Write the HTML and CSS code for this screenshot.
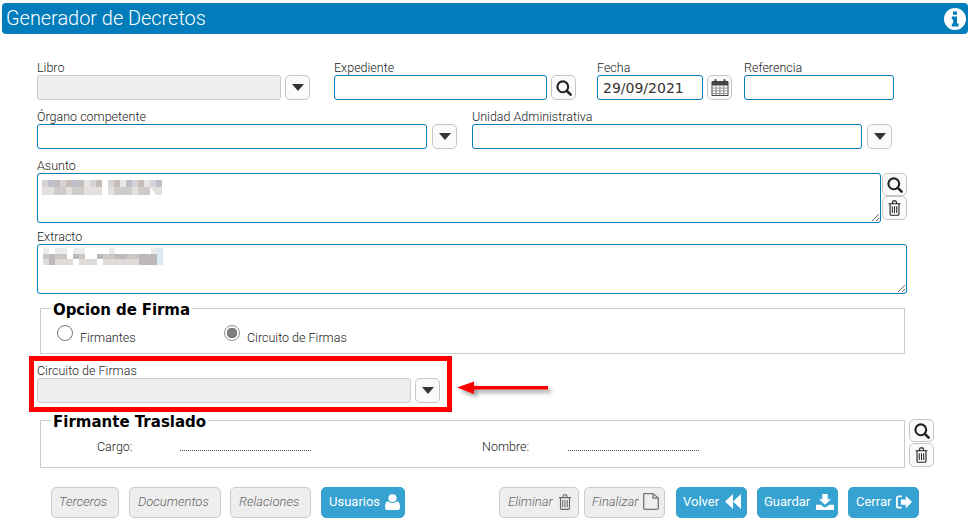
FILE: index.html
```html
<!DOCTYPE html>
<html lang="es">
<head>
<meta charset="utf-8">
<title>Generador de Decretos</title>
<link rel="stylesheet" href="styles.css">
</head>
<body>
<svg class="defs" width="0" height="0" aria-hidden="true">
  <symbol id="i-caret" viewBox="0 0 12 7"><path d="M0 0h12L6 7z"/></symbol>
  <symbol id="i-search" viewBox="0 0 16 16"><circle cx="6.800" cy="6.800" r="5.400" fill="none" stroke="currentColor" stroke-width="2.100"/><path d="M10.800 10.800l3.800 3.800" stroke="currentColor" stroke-width="2.600" stroke-linecap="round"/></symbol>
  <symbol id="i-trash" viewBox="0 0 14 17"><path fill="none" stroke="currentColor" stroke-width="1.200" d="M.6 3.900h12.800M2.200 3.900v11a1.400 1.400 0 0 0 1.400 1.400h6.800a1.400 1.400 0 0 0 1.400-1.400v-11M4.500 3.900l.7-2.200a1 1 0 0 1 1-.9h1.600a1 1 0 0 1 1 .9l.7 2.200"/><path fill="none" stroke="currentColor" stroke-width="1.100" d="M4.600 6.500v7.500M7 6.500v7.500M9.400 6.500v7.500"/></symbol>
  <symbol id="i-cal" viewBox="0 0 18 18"><path fill="currentColor" d="M1.500 2.500h2v-1a1 1 0 0 1 2 0v1h7v-1a1 1 0 0 1 2 0v1h2a1 1 0 0 1 1 1v13a1 1 0 0 1-1 1h-15a1 1 0 0 1-1-1v-13a1 1 0 0 1 1-1z"/><path fill="#fff" d="M1.500 7h15v9.500h-15z"/><path fill="none" stroke="#666" stroke-width=".7" d="M5 7v9.500M8.900 7v9.500M12.800 7v9.500M1.500 9.600h15M1.500 12.400h15M1.500 15h15"/></symbol>
  <symbol id="i-info" viewBox="0 0 22 22"><circle cx="11" cy="11" r="11" fill="#fff"/><path fill="#027cbb" d="M9 3.500h4v3.300H9zM7.800 8.600H13v7h1.600v3H7.800v-3h1.400v-4H7.800z"/></symbol>
  <symbol id="i-user" viewBox="0 0 16 18" preserveAspectRatio="none"><circle cx="8" cy="4.600" r="4.400" fill="currentColor"/><path fill="currentColor" d="M3.200 8.200C4.400 9.400 6 10 8 10s3.600-.6 4.800-1.800c2 .4 3.200 2.400 3.200 6v1.300c0 1.500-1 2.500-2.500 2.500h-11C1 18 0 17 0 15.500v-1.300c0-3.600 1.200-5.600 3.200-6z"/></symbol>
  <symbol id="i-back" viewBox="0 0 16 18" preserveAspectRatio="none"><path fill="currentColor" d="M8 0v18L0 9zM16 0v18L8 9z"/></symbol>
  <symbol id="i-down" viewBox="0 0 18 18" preserveAspectRatio="none"><path fill="currentColor" d="M6.300 0h5.400v6H15L9 12 3 6h3.300z"/><path fill="currentColor" d="M0 12h4.800l2.400 2.300c1 .9 2.600.9 3.600 0L13.200 12H18v6H0z"/></symbol>
  <symbol id="i-out" viewBox="0 0 18 16" preserveAspectRatio="none"><path fill="none" stroke="currentColor" stroke-width="2" d="M6.500 1.500H3A2 2 0 0 0 1 3.500v9a2 2 0 0 0 2 2h3.500"/><path fill="currentColor" d="M5.500 5h5.500V.8L18 8l-7 7.200V11H5.500z"/></symbol>
  <symbol id="i-file" viewBox="0 0 16 20" preserveAspectRatio="none"><path fill="none" stroke="currentColor" stroke-width="1.300" d="M.7.700h9.300l5.300 5.300v12a1.300 1.300 0 0 1-1.300 1.300H2A1.300 1.300 0 0 1 .7 18zM10 .7V6h5.300"/></symbol>
</svg>

<header class="titlebar">
  <h1 class="title">Generador de Decretos</h1>
  <svg class="info"><use href="#i-info"/></svg>
</header>

<form class="form">
  <div class="row">
    <div class="field w-libro"><label class="lbl">Libro</label><input class="inp inp-off" disabled></div>
    <button type="button" class="ibtn"><svg class="ic-caret"><use href="#i-caret"/></svg></button>
    <div class="field w-exp gap-exp"><label class="lbl">Expediente</label><input class="inp"></div>
    <button type="button" class="ibtn"><svg class="ic-search"><use href="#i-search"/></svg></button>
    <div class="field w-fecha gap-fecha"><label class="lbl">Fecha</label><input class="inp inp-date" value="29/09/2021"></div>
    <button type="button" class="ibtn"><svg class="ic-cal"><use href="#i-cal"/></svg></button>
    <div class="field w-ref gap-ref"><label class="lbl">Referencia</label><input class="inp"></div>
  </div>

  <div class="row row-org">
    <div class="field w-org"><label class="lbl">Órgano competente</label><input class="inp"></div>
    <button type="button" class="ibtn"><svg class="ic-caret"><use href="#i-caret"/></svg></button>
    <div class="field w-org gap-uni"><label class="lbl">Unidad Administrativa</label><input class="inp"></div>
    <button type="button" class="ibtn"><svg class="ic-caret"><use href="#i-caret"/></svg></button>
  </div>

  <div class="row row-area">
    <div class="field w-asunto">
      <label class="lbl">Asunto</label>
      <div class="area-wrap">
        <textarea class="area"></textarea>
        <svg class="mosaic mosaic-a" width="120" height="15" viewBox="0 0 120 15">
          <path fill="#d6d2d6" d="M0 0h6v7H0zM18 0h6v7h-6zM48 0h6v7h-6zM66 0h6v7h-6zM90 0h6v7h-6zM108 0h6v7h-6z"/>
          <path fill="#c4bdb8" d="M12 0h6v7h-6zM24 0h6v7h-6zM36 0h6v7h-6zM54 0h6v7h-6zM72 0h6v7h-6zM96 0h6v7h-6z"/>
          <path fill="#bcc0cc" d="M6 0h6v7H6zM30 0h6v7h-6zM84 0h6v7h-6zM114 0h6v7h-6z"/>
          <path fill="#e8e6e4" d="M42 0h6v7h-6zM78 0h6v7h-6zM102 0h6v7h-6z"/>
          <path fill="#e4e0e0" d="M0 7h12v8H0zM24 7h6v8h-6zM42 7h18v8H42zM66 7h6v8h-6zM90 7h6v8h-6zM108 7h12v8h-6z"/>
          <path fill="#cfcbcb" d="M12 7h12v8H12zM30 7h12v8H30zM72 7h18v8H72zM96 7h12v8H96z"/>
          <path fill="#fff" d="M60 0h6v15h-6z"/>
        </svg>
      </div>
    </div>
    <div class="sidebtns sidebtns-a">
      <button type="button" class="ibtn ibtn-s"><svg class="ic-search"><use href="#i-search"/></svg></button>
      <button type="button" class="ibtn ibtn-s"><svg class="ic-trash"><use href="#i-trash"/></svg></button>
    </div>
  </div>

  <div class="field w-ext row-ext">
    <label class="lbl">Extracto</label>
    <div class="area-wrap">
      <textarea class="area"></textarea>
      <svg class="mosaic mosaic-b" width="120" height="17" viewBox="0 0 120 17">
        <path fill="#eceaea" d="M0 0h6v6H0zM12 0h12v6H12zM30 0h12v6H30zM66 0h6v6h-6zM108 0h6v6h-6z"/>
        <path fill="#cbc7c6" d="M0 6h6v5H0zM12 6h12v5H12zM36 6h6v5h-6zM60 6h12v5H60zM84 6h12v5H84zM108 6h6v5h-6z"/>
        <path fill="#bdb8ba" d="M6 6h6v11H6zM30 6h6v5h-6zM54 6h6v5h-6zM72 6h12v5H72zM96 6h12v11H96zM102 6h12v11h-12z"/>
        <path fill="#dfdbd9" d="M0 11h6v6H0zM12 11h18v6H12zM36 11h18v6H36zM60 11h36v6H60z"/>
        <path fill="#dcebf8" d="M114 0h6v17h-6z"/>
      </svg>
    </div>
  </div>

  <fieldset class="group group-op">
    <legend class="legend">Opcion de Firma</legend>
    <div class="radios">
      <label class="radio r-first"><input type="radio" name="op" class="rad"><span class="rad-txt">Firmantes</span></label>
      <label class="radio"><input type="radio" name="op" class="rad" checked><span class="rad-txt">Circuito de Firmas</span></label>
    </div>
  </fieldset>

  <div class="row row-circ">
    <div class="field w-circ"><label class="lbl">Circuito de Firmas</label><input class="inp inp-off" disabled></div>
    <button type="button" class="ibtn"><svg class="ic-caret"><use href="#i-caret"/></svg></button>
    <div class="mark"></div>
    <svg class="arrow" width="92" height="14" viewBox="0 0 92 14"><path fill="#f00" d="M0 6.500L17 .5v4.500h74v3.500H17V13z"/></svg>
  </div>

  <div class="row row-tras">
    <fieldset class="group group-tr">
      <legend class="legend">Firmante Traslado</legend>
      <div class="kv">
        <span class="k k-cargo">Cargo:</span><span class="dots"></span>
        <span class="k k-nombre">Nombre:</span><span class="dots"></span>
      </div>
    </fieldset>
    <div class="sidebtns sidebtns-b">
      <button type="button" class="ibtn ibtn-s"><svg class="ic-search"><use href="#i-search"/></svg></button>
      <button type="button" class="ibtn ibtn-s"><svg class="ic-trash"><use href="#i-trash"/></svg></button>
    </div>
  </div>

  <div class="actions">
    <button type="button" class="btn off w-terc">Terceros</button>
    <button type="button" class="btn off w-doc">Documentos</button>
    <button type="button" class="btn off w-rel">Relaciones</button>
    <button type="button" class="btn on w-usu">Usuarios<svg class="bi bi-user"><use href="#i-user"/></svg></button>
    <span class="spacer"></span>
    <button type="button" class="btn off w-eli">Eliminar<svg class="bi bi-trash"><use href="#i-trash"/></svg></button>
    <button type="button" class="btn off w-fin">Finalizar<svg class="bi bi-file"><use href="#i-file"/></svg></button>
    <button type="button" class="btn on w-vol">Volver<svg class="bi bi-back"><use href="#i-back"/></svg></button>
    <button type="button" class="btn on w-gua">Guardar<svg class="bi bi-down"><use href="#i-down"/></svg></button>
    <button type="button" class="btn on w-cer">Cerrar<svg class="bi bi-out"><use href="#i-out"/></svg></button>
  </div>
</form>
</body>
</html>
```
FILE: styles.css
```css
* { box-sizing: border-box; }
html, body { margin: 0; padding: 0; height: 100%; overflow: hidden; background: #fff; }
body { font-family: Roboto, "Liberation Sans", sans-serif; color: #333; font-size: 12.5px; }
.defs { position: absolute; }

.titlebar { display: flex; align-items: center; justify-content: space-between; height: 31px; margin: 3px 0 0 2px; padding: 0 2px 1px 4px; background: #027cbb; border-radius: 4px; }
.title { margin: 0; font-size: 19.900px; font-weight: 300; color: #fff; }
.info { width: 22px; height: 22px; margin-top: 1px; }

.form { padding: 27px 0 0 37px; }
.row { display: flex; align-items: flex-end; margin-bottom: 10px; }
.field { display: flex; flex-direction: column; }
.lbl { height: 14px; line-height: 14px; font-size: 12.500px; font-weight: 300; color: #222; }
.inp { display: block; width: 100%; height: 25px; padding: 0 5px; border: 1px solid #027cbb; border-radius: 3px; background: #fff; outline: none; }
.inp-off { background: #eee; border-color: #ccc; }
.inp-date { font-family: "DejaVu Sans", sans-serif; font-size: 14px; color: #333; }

.ibtn { display: flex; align-items: center; justify-content: center; flex: none; width: 25px; height: 25px; margin-left: 4px; padding: 0; border: 1px solid #c6c6c6; border-radius: 5px; background: #fafafa; color: #222; }
.row-org .ibtn { margin-left: 5px; }
.ibtn-s { margin: 0; height: 24px; }
.ibtn-s:first-child { height: 23px; }
.ic-caret { width: 12px; height: 7px; fill: #333; }
.ic-search { width: 16px; height: 16px; }
.ic-cal { width: 18px; height: 19px; color: #444; }
.ic-trash { width: 13px; height: 16px; }

.w-libro { width: 244px; }
.w-exp { width: 213px; }
.gap-exp { margin-left: 24px; }
.w-fecha { width: 106px; }
.gap-fecha { margin-left: 21px; }
.w-ref { width: 150px; }
.gap-ref { margin-left: 12px; }
.w-org { width: 390px; }
.gap-uni { margin-left: 15px; }
.w-asunto { width: 844px; }
.w-ext { width: 870px; }
.w-circ { width: 374px; }

.row-area { align-items: flex-start; margin-bottom: 7px; }
.area-wrap { position: relative; }
.area { display: block; width: 100%; height: 50px; padding: 2px; border: 1px solid #027cbb; border-radius: 3px; background: #fff; outline: none; font-family: inherit; }
.mosaic { position: absolute; top: 7px; left: 5px; pointer-events: none; }
.mosaic-b { top: 4px; left: 6px; }
.sidebtns { display: flex; flex-direction: column; flex: none; }
.sidebtns-a { margin: 14px 0 0 1px; }
.sidebtns-b { gap: 1px; margin: 9px 0 0 4px; }

.group { margin: 0; padding: 0 10px; border: 1px solid #ccc; min-width: 0; }
.legend { height: 20px; line-height: 24px; padding: 0 2px; font-family: "DejaVu Sans", sans-serif; font-size: 15px; font-weight: 700; color: #000; }
.group-op .legend { letter-spacing: -.1px; }
.group-op { width: 865px; height: 56px; margin: 4px 0 0 3px; }
.group-tr { width: 865px; height: 58px; margin-left: 3px; }

.radios { display: flex; align-items: flex-start; margin: 7px 0 0 6px; }
.radio { display: flex; align-items: flex-start; font-weight: 300; color: #222; }
.r-first { width: 167px; }
.rad-txt { margin-top: 6px; line-height: 14px; }
.rad { appearance: none; flex: none; width: 16px; height: 16px; margin: 0 7px 0 0; border: 1px solid #757575; border-radius: 50%; background: #fff; }
.rad:checked { border-color: #8f8f8f; background: radial-gradient(circle, #7f7f7f 0 5px, #fff 5.600px); }

.row-circ { position: relative; margin: 10px 0 0 0; }
.mark { position: absolute; left: -8px; top: -8px; width: 423px; height: 56px; border: 5px solid #f00; pointer-events: none; }
.arrow { position: absolute; left: 420px; top: 17px; overflow: visible; filter: drop-shadow(3px 3px 2px rgba(0, 0, 0, .4)); }

.row-tras { align-items: flex-start; margin: 7px 0 0 0; }
.kv { display: flex; align-items: center; margin-top: 9px; font-weight: 300; color: #222; }
.k { display: block; }
.k-cargo { width: 83px; margin-left: 46px; }
.k-nombre { width: 86px; margin-left: 171px; }
.dots { display: block; width: 131px; height: 9px; border-bottom: 1px dotted #555; }

.actions { display: flex; align-items: stretch; width: 868px; height: 31px; margin: 19px 0 0 14px; }
.spacer { flex: 1; }
.btn { display: flex; align-items: center; justify-content: flex-start; flex: none; gap: 5px; padding: 0 0 2px; border: 1px solid #ccc; border-radius: 5px; font-family: inherit; font-size: 13px; font-weight: 300; }
.off { background: #eee; color: #666; font-style: italic; }
.on { background: #35a2d1; border-color: #35a2d1; color: #fff; font-weight: 400; }
.bi { flex: none; }
.bi-user { width: 15px; height: 16px; }
.bi-trash { width: 14px; height: 16px; color: #666; }
.bi-file { width: 16px; height: 17px; color: #777; }
.bi-back { width: 16px; height: 15px; margin-left: 1px; }
.bi-down { width: 18px; height: 16px; margin-left: 1px; }
.bi-out { width: 16px; height: 14px; }
.w-terc { width: 68px; padding-left: 7px; }
.w-doc { width: 92px; margin-left: 10px; padding-left: 8px; }
.w-rel { width: 81px; margin-left: 9px; padding-left: 8px; }
.w-usu { width: 84px; margin-left: 10px; padding-left: 7px; }
.w-eli { width: 80px; padding-left: 8px; }
.w-fin { width: 81px; margin-left: 5px; padding-left: 7px; }
.w-vol { width: 71px; margin-left: 11px; padding-left: 6px; }
.w-gua { width: 81px; margin-left: 10px; padding-left: 6px; }
.w-cer { width: 71px; margin-left: 10px; padding-left: 7px; }
```
